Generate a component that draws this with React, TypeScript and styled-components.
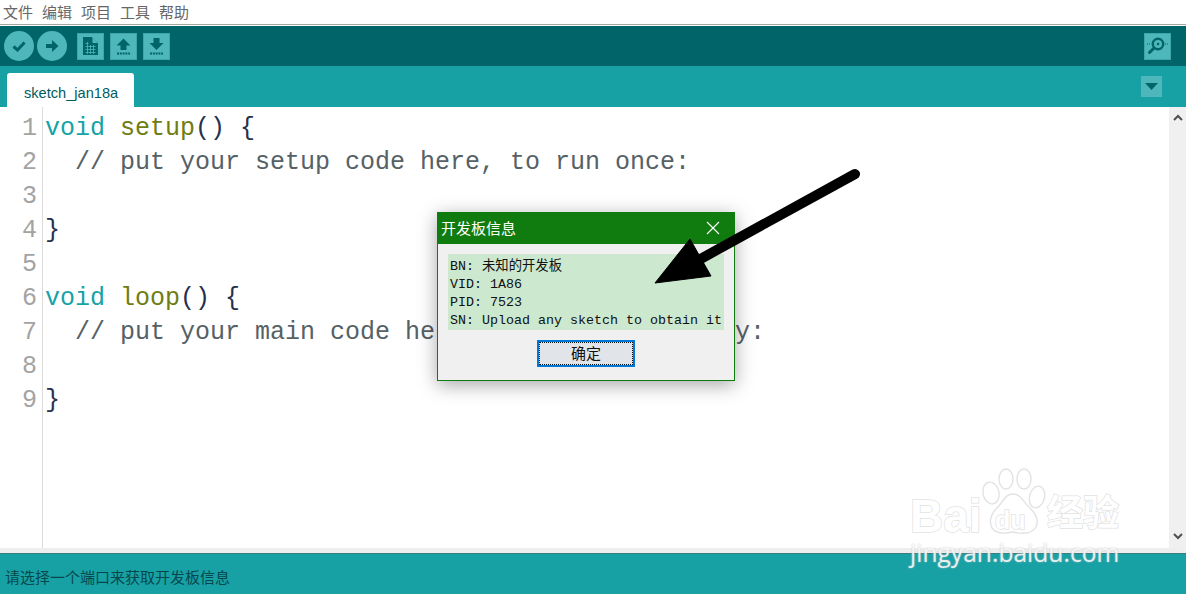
import React from 'react';
import styled, { createGlobalStyle } from 'styled-components';

const CJK = '"Noto Sans CJK SC", "Liberation Sans", sans-serif';
const MONO = '"Liberation Mono", "Noto Sans CJK SC", monospace';

const GlobalStyle = createGlobalStyle`
  html, body {
    margin: 0;
    padding: 0;
    background: #fff;
  }
`;

const Page = styled.div`
  position: relative;
  display: flex;
  flex-direction: column;
  width: 1186px;
  height: 594px;
  overflow: hidden;
  background: #fff;
`;

const MenuBar = styled.div`
  display: flex;
  flex: none;
  gap: 9px;
  height: 24px;
  padding-left: 3px;
  align-items: center;
  border-bottom: 1px solid #a5a5a5;
  background: #fff;
`;

const MenuItem = styled.span`
  font: 15px/24px ${CJK};
  color: #666;
`;

const Toolbar = styled.div`
  display: flex;
  flex: none;
  align-items: center;
  height: 40px;
  margin-top: 1px;
  padding: 0 15px 0 4px;
  background: #006468;
`;

const RoundButton = styled.button<{ $next?: boolean }>`
  display: flex;
  align-items: center;
  justify-content: center;
  width: 30px;
  height: 30px;
  padding: 0;
  margin-left: ${(p) => (p.$next ? '3px' : '0')};
  border: 0;
  border-radius: 50%;
  background: #4db7bb;
`;

const SquareButton = styled.button<{ $first?: boolean; $end?: boolean }>`
  display: flex;
  align-items: center;
  justify-content: center;
  width: 27px;
  height: 27px;
  padding: 0;
  margin-left: ${(p) => (p.$end ? 'auto' : p.$first ? '10px' : '6px')};
  border: 1px solid #3ea6aa;
  box-sizing: border-box;
  background: #4db7bb;
`;

const TabBar = styled.div`
  display: flex;
  flex: none;
  align-items: flex-end;
  justify-content: space-between;
  height: 41px;
  padding: 0 24px 0 7px;
  background: #17a1a5;
`;

const Tab = styled.div`
  width: 110px;
  height: 34px;
  padding-left: 17px;
  border-radius: 3px 3px 0 0;
  background: #fff;
  font: 14.6px/41px "Liberation Sans", sans-serif;
  color: #005c5f;
`;

const TabMenu = styled.div`
  display: flex;
  align-items: center;
  justify-content: center;
  align-self: flex-start;
  width: 21px;
  height: 21px;
  margin-top: 10px;
  background: #4db7bb;
`;

const Editor = styled.div`
  display: flex;
  flex: none;
  height: 441px;
  background: #fff;
`;

const Gutter = styled.div`
  width: 37px;
  padding: 5px 5px 0 0;
  border-right: 1px solid #dcdcdc;
  text-align: right;
  font: 25px/34px ${MONO};
  color: #a3a3a3;
`;

const Code = styled.div`
  flex: 1;
  padding: 5px 0 0 2px;
  font: 25px/34px ${MONO};
  color: #566166;
  white-space: pre;
`;

const CodeLine = styled.div`
  height: 34px;
`;

const Keyword = styled.span`
  color: #14a3a8;
`;

const Func = styled.span`
  color: #6f7d12;
`;

const Brace = styled.span`
  color: #24304c;
`;

const ScrollBar = styled.div`
  display: flex;
  flex-direction: column;
  justify-content: space-between;
  align-items: center;
  width: 17px;
  padding: 7px 0 8px;
  box-sizing: border-box;
  background: #f0f0f0;
`;

const Splitter = styled.div`
  flex: none;
  height: 5px;
  background: #eeeeee;
`;

const StatusBar = styled.div`
  flex: none;
  height: 41px;
  box-sizing: border-box;
  padding: 6px 0 0 5px;
  border-top: 1px solid #3f7c7f;
  background: #17a1a5;
  font: 15px/34px ${CJK};
  color: #07484c;
`;

const Dialog = styled.div`
  position: absolute;
  left: 437px;
  top: 212px;
  width: 298px;
  height: 169px;
  box-sizing: border-box;
  border: 1px solid #107c10;
  background: #f0f0f0;
  box-shadow: 0 4px 18px rgba(0, 0, 0, 0.35);
`;

const DialogTitle = styled.div`
  display: flex;
  align-items: center;
  justify-content: space-between;
  height: 31px;
  box-sizing: border-box;
  padding: 0 14px 2px 3px;
  background: #107c10;
  font: 15px/29px ${CJK};
  color: #fff;
`;

const InfoBox = styled.div`
  margin: 10px 10px 0;
  height: 76px;
  padding: 4px 0 0 2px;
  box-sizing: border-box;
  background: #cce8cf;
  font: 13.33px/18px ${MONO};
  color: #111;
`;

const InfoLine = styled.div`
  height: 18px;
  white-space: pre;
`;

const ButtonRow = styled.div`
  display: flex;
  justify-content: center;
  margin-top: 10px;
`;

const OkButton = styled.button`
  width: 98px;
  height: 27px;
  padding: 0 0 2px;
  border: 2px solid #0078d7;
  outline: 1px dotted #111;
  outline-offset: -3px;
  background: #e1e4e8;
  font: 15px/20px ${CJK};
  color: #111;
`;

const ArrowOverlay = styled.svg`
  position: absolute;
  left: 640px;
  top: 160px;
`;

const Watermark = styled.div`
  position: absolute;
  left: 908px;
  top: 462px;
  width: 220px;
  height: 110px;
`;

const MarkText = styled.span<{ $x: number; $y: number; $size: number }>`
  position: absolute;
  left: ${(p) => p.$x}px;
  top: ${(p) => p.$y}px;
  font: bold ${(p) => p.$size}px/1 "Liberation Sans", "Noto Sans CJK SC", sans-serif;
  color: #fff;
  -webkit-text-stroke: 1.5px #e2e2e2;
  paint-order: stroke fill;
  white-space: nowrap;
`;

const MarkUrl = styled.span`
  position: absolute;
  left: 2px;
  top: 79px;
  font: 24.6px/1 "Open Sans", "Liberation Sans", sans-serif;
  color: rgba(255, 255, 255, 0.82);
  text-shadow: 0 0 2px rgba(190, 190, 190, 0.9);
  white-space: nowrap;
`;

const PawSvg = styled.svg`
  position: absolute;
  left: 70px;
  top: 0;
`;

const code: React.ReactNode[] = [
  <><Keyword>void</Keyword> <Func>setup</Func><Brace>()</Brace> <Brace>{'{'}</Brace></>,
  '  // put your setup code here, to run once:',
  '',
  <Brace>{'}'}</Brace>,
  '',
  <><Keyword>void</Keyword> <Func>loop</Func><Brace>()</Brace> <Brace>{'{'}</Brace></>,
  '  // put your main code here, to run repeatedly:',
  '',
  <Brace>{'}'}</Brace>,
];

const info = ['BN: 未知的开发板', 'VID: 1A86', 'PID: 7523', 'SN: Upload any sketch to obtain it'];

const App = () => (
  <Page>
    <GlobalStyle />
    <MenuBar>
      {['文件', '编辑', '项目', '工具', '帮助'].map((m) => (
        <MenuItem key={m}>{m}</MenuItem>
      ))}
    </MenuBar>
    <Toolbar>
      <RoundButton aria-label="verify">
        <svg width="18" height="18" viewBox="0 0 18 18">
          <path d="M3.5 9.5 L7.5 13 L14.5 5.5" fill="none" stroke="#006468" strokeWidth="3" />
        </svg>
      </RoundButton>
      <RoundButton $next aria-label="upload">
        <svg width="18" height="18" viewBox="0 0 18 18">
          <path d="M3 7h6V3l6.5 6L9 15v-4H3z" fill="#006468" />
        </svg>
      </RoundButton>
      <SquareButton $first aria-label="new">
        <svg width="17" height="20" viewBox="0 0 17 20">
          <path d="M1 1h9l6 6v12H1z" fill="#006468" />
          <path d="M10.5 1v6h5.5z" fill="#4db7bb" />
          <path d="M3.5 7.5h3M3.5 10.5h10M3.5 13.5h10M3.5 16.5h10M5.5 6v12M8.5 9v9M11.5 9v9" stroke="#4db7bb" strokeWidth=".8" fill="none" />
        </svg>
      </SquareButton>
      <SquareButton aria-label="open">
        <svg width="17" height="18" viewBox="0 0 17 18">
          <path d="M8.5 1.5 L15.5 8.5H11.5V13H5.5V8.5H1.5z" fill="#006468" />
          <path d="M2 16.5h13" stroke="#006468" strokeWidth="2" strokeDasharray="2 .8" />
        </svg>
      </SquareButton>
      <SquareButton aria-label="save">
        <svg width="17" height="18" viewBox="0 0 17 18">
          <path d="M5.5 1H11.5V6H15.5L8.5 13 1.5 6H5.5z" fill="#006468" />
          <path d="M2 16.5h13" stroke="#006468" strokeWidth="2" strokeDasharray="2 .8" />
        </svg>
      </SquareButton>
      <SquareButton $end aria-label="serial monitor">
        <svg width="23" height="20" viewBox="0 0 23 20">
          <circle cx="12" cy="8" r="5.2" fill="none" stroke="#006468" strokeWidth="2.4" />
          <circle cx="12" cy="8" r="1.3" fill="#006468" />
          <path d="M8 12 L3.5 16.5" stroke="#006468" strokeWidth="3" strokeLinecap="round" />
          <path d="M1 8h3M19 8h3" stroke="#006468" strokeWidth="1" strokeDasharray="1 1" />
        </svg>
      </SquareButton>
    </Toolbar>
    <TabBar>
      <Tab>sketch_jan18a</Tab>
      <TabMenu>
        <svg width="13" height="7" viewBox="0 0 13 7">
          <path d="M0 0h13L6.5 7z" fill="#006468" />
        </svg>
      </TabMenu>
    </TabBar>
    <Editor>
      <Gutter>
        {code.map((_, i) => (
          <div key={i}>{i + 1}</div>
        ))}
      </Gutter>
      <Code>
        {code.map((line, i) => (
          <CodeLine key={i}>{line}</CodeLine>
        ))}
      </Code>
      <ScrollBar>
        <svg width="10" height="7" viewBox="0 0 10 7">
          <path d="M1 6 L5 2 L9 6" fill="none" stroke="#505050" strokeWidth="2" />
        </svg>
        <svg width="10" height="7" viewBox="0 0 10 7">
          <path d="M1 1 L5 5 L9 1" fill="none" stroke="#505050" strokeWidth="2" />
        </svg>
      </ScrollBar>
    </Editor>
    <Splitter />
    <StatusBar>请选择一个端口来获取开发板信息</StatusBar>

    <Dialog>
      <DialogTitle>
        开发板信息
        <svg width="14" height="14" viewBox="0 0 14 14">
          <path d="M1 1 L13 13 M13 1 L1 13" stroke="#fff" strokeWidth="1.1" />
        </svg>
      </DialogTitle>
      <InfoBox>
        {info.map((l) => (
          <InfoLine key={l}>{l}</InfoLine>
        ))}
      </InfoBox>
      <ButtonRow>
        <OkButton>确定</OkButton>
      </ButtonRow>
    </Dialog>

    <ArrowOverlay width="230" height="135" viewBox="640 160 230 135">
      <path d="M855 174 L695 262" stroke="#000" strokeWidth="10" strokeLinecap="round" />
      <path d="M655 283 L690 239 L711 276 Z" fill="#000" stroke="#000" strokeWidth="1" />
    </ArrowOverlay>

    <Watermark>
      <MarkText $x={2} $y={31} $size={46}>Bai</MarkText>
      <PawSvg width="70" height="76" viewBox="0 0 70 76">
        <g fill="#fff" stroke="#e2e2e2" strokeWidth="1.4">
          <ellipse cx="13" cy="31" rx="8" ry="11" transform="rotate(-12 13 31)" />
          <ellipse cx="28" cy="17" rx="7" ry="10" />
          <ellipse cx="46" cy="17" rx="7" ry="10" />
          <ellipse cx="59" cy="35" rx="7.5" ry="11" transform="rotate(14 59 35)" />
          <path d="M35 32 C27 32 25 40 19 46 C12 53 11 61 14 66 C18 72 26 72 35 70 C44 72 54 72 58 65 C61 59 58 52 52 46 C46 41 43 32 35 32 Z" />
        </g>
      </PawSvg>
      <MarkText $x={87} $y={46} $size={25}>du</MarkText>
      <MarkText $x={139} $y={34} $size={36}>经验</MarkText>
      <MarkUrl>jingyan.baidu.com</MarkUrl>
    </Watermark>
  </Page>
);

export default App;
